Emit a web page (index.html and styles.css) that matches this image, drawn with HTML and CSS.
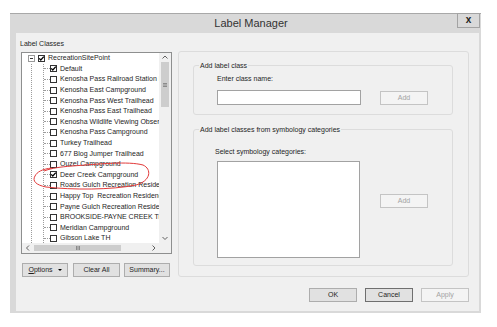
FILE: index.html
```html
<!DOCTYPE html>
<html>
<head>
<meta charset="utf-8">
<link rel="stylesheet" href="styles.css">
</head>
<body>
<div class="window">
  <div class="titlebar">
    <div class="title">Label Manager</div>
    <div class="close">x</div>
  </div>
  <div class="client">
    <div class="main">
      <div class="left">
        <div class="section-label">Label Classes</div>
        <div class="tree">
          <div class="tree-content">
            <div class="row root">
              <span class="expander"><span class="minus"></span></span>
              <span class="cb"><svg viewBox="0 0 7 7" class="tick"><path d="M1.2 3.4 L2.8 5 L5.8 1.6"/></svg></span>
              <span class="txt">RecreationSitePoint</span>
            </div>
            <div class="children">
              <div class="row"><span class="stub"></span><span class="cb"><svg viewBox="0 0 7 7" class="tick"><path d="M1.2 3.4 L2.8 5 L5.8 1.6"/></svg></span><span class="txt">Default</span></div>
              <div class="row"><span class="stub"></span><span class="cb"></span><span class="txt">Kenosha Pass Railroad Station Interpretive Site</span></div>
              <div class="row"><span class="stub"></span><span class="cb"></span><span class="txt">Kenosha East Campground</span></div>
              <div class="row"><span class="stub"></span><span class="cb"></span><span class="txt">Kenosha Pass West Trailhead</span></div>
              <div class="row"><span class="stub"></span><span class="cb"></span><span class="txt">Kenosha Pass East Trailhead</span></div>
              <div class="row"><span class="stub"></span><span class="cb"></span><span class="txt">Kenosha Wildlife Viewing Observation Site</span></div>
              <div class="row"><span class="stub"></span><span class="cb"></span><span class="txt">Kenosha Pass Campground</span></div>
              <div class="row"><span class="stub"></span><span class="cb"></span><span class="txt">Turkey Trailhead</span></div>
              <div class="row"><span class="stub"></span><span class="cb"></span><span class="txt">677 Blog Jumper Trailhead</span></div>
              <div class="row"><span class="stub"></span><span class="cb"></span><span class="txt">Ouzel Campground</span></div>
              <div class="row"><span class="stub"></span><span class="cb"><svg viewBox="0 0 7 7" class="tick"><path d="M1.2 3.4 L2.8 5 L5.8 1.6"/></svg></span><span class="txt">Deer Creek Campground</span></div>
              <div class="row"><span class="stub"></span><span class="cb"></span><span class="txt">Roads Gulch Recreation Residence</span></div>
              <div class="row"><span class="stub"></span><span class="cb"></span><span class="txt">Happy Top  Recreation Residence</span></div>
              <div class="row"><span class="stub"></span><span class="cb"></span><span class="txt">Payne Gulch Recreation Residence</span></div>
              <div class="row"><span class="stub"></span><span class="cb"></span><span class="txt">BROOKSIDE-PAYNE CREEK Trail</span></div>
              <div class="row"><span class="stub"></span><span class="cb"></span><span class="txt">Meridian Campground</span></div>
              <div class="row"><span class="stub"></span><span class="cb"></span><span class="txt">Gibson Lake TH</span></div>
            </div>
          </div>
          <div class="vscroll">
            <div class="varrow"><svg viewBox="0 0 12 9"><path d="M3.5 5.5 L6 3 L8.5 5.5"/></svg></div>
            <div class="vthumb"><svg viewBox="0 0 8 6"><path d="M2 1.5 H6 M2 3 H6 M2 4.5 H6"/></svg></div>
            <div class="vtrack"></div>
            <div class="varrow"><svg viewBox="0 0 12 9"><path d="M3.5 3.5 L6 6 L8.5 3.5"/></svg></div>
          </div>
          <div class="hscroll">
            <div class="harrow"><svg viewBox="0 0 12 10"><path d="M7 2.5 L4.5 5 L7 7.5"/></svg></div>
            <div class="hthumb"><svg viewBox="0 0 8 6"><path d="M2.5 1 V5 M4 1 V5 M5.5 1 V5"/></svg></div>
            <div class="htrack"></div>
            <div class="harrow"><svg viewBox="0 0 11 10"><path d="M4.5 2.5 L7 5 L4.5 7.5"/></svg></div>
          </div>
          <div class="corner"></div>
        </div>
        <div class="left-buttons">
          <div class="btn b-options"><span><u>O</u>ptions</span><span class="caret"></span></div>
          <div class="btn b-clear">Clear All</div>
          <div class="btn b-summary">Summary...</div>
        </div>
      </div>
      <div class="right">
        <div class="group g1">
          <span class="legend">Add label class</span>
          <div class="field-label">Enter class name:</div>
          <div class="field-row">
            <div class="input"></div>
            <div class="btn disabled add1">Add</div>
          </div>
        </div>
        <div class="group g2">
          <span class="legend">Add label classes from symbology categories</span>
          <div class="field-label">Select symbology categories:</div>
          <div class="field-row">
            <div class="listbox"></div>
            <div class="btn disabled add2">Add</div>
          </div>
        </div>
      </div>
    </div>
    <div class="footer">
      <div class="btn b-ok">OK</div>
      <div class="btn b-cancel">Cancel</div>
      <div class="btn disabled b-apply">Apply</div>
    </div>
  </div>
</div>
<svg class="annot" viewBox="0 0 497 327" width="497" height="327">
  <path d="M44 171 C52 168 60 167 72 166 C100 164 128 161 143 165 C152 169 151 181 136 185 C112 190 72 190 46 187 C36 185 32 181 35 176 C37 172 42 169 52 168"/>
</svg>
</body>
</html>
```

FILE: styles.css
```css
html, body {
  margin: 0;
  padding: 0;
  background: #ffffff;
}
body {
  position: relative;
  width: 497px;
  height: 327px;
  overflow: hidden;
  font-family: "Liberation Sans", Arial, sans-serif;
  font-size: 7px;
  color: #1e1e1e;
}
.window {
  margin: 13px 0 0 10px;
  width: 471px;
  height: 300px;
  background: #d9d9d9;
  display: flex;
  flex-direction: column;
}
.titlebar {
  height: 20px;
  box-sizing: border-box;
  border-top: 1px solid #a8a8a8;
  background: linear-gradient(to right, transparent 170px, #5d5130 170px, #5d5130 430px, transparent 430px) 0 -1px / 100% 1px no-repeat, #d9d9d9;
  display: flex;
  align-items: flex-start;
}
.title {
  flex: 1;
  text-align: center;
  padding-left: 35px;
  font-size: 11px;
  line-height: 19px;
  color: #333;
}
.close {
  width: 23px;
  height: 15px;
  margin-top: -1px;
  margin-right: 1px;
  box-sizing: border-box;
  border: 1px solid #a3a3a3;
  background: #d9d9d9;
  font-weight: bold;
  font-size: 10px;
  line-height: 12px;
  text-align: center;
  color: #222;
}
.client {
  margin: 0 2px 2px 6px;
  height: 278px;
  background: #f0f0f0;
  box-sizing: border-box;
  padding: 6px 10px 0 5px;
}
.main {
  display: flex;
  gap: 6px;
  align-items: flex-start;
}
.left {
  width: 151px;
}
.section-label {
  line-height: 10px;
  height: 10px;
  margin-left: -1px;
}
.tree {
  margin-top: 3px;
  width: 151px;
  height: 202px;
  box-sizing: border-box;
  border: 1px solid #8e8f8f;
  background: #fff;
  display: grid;
  grid-template-columns: 137px 12px;
  grid-template-rows: 190px 10px;
}
.tree-content {
  overflow: hidden;
}
.row {
  height: 10.6px;
  display: flex;
  align-items: center;
}
.row.root {
  padding-left: 6px;
}
.expander {
  width: 7px;
  height: 7px;
  box-sizing: border-box;
  border: 1px solid #9a9a9a;
  display: flex;
  align-items: center;
  justify-content: center;
  background: #fff;
  flex: none;
}
.minus {
  width: 3px;
  height: 1px;
  background: #333;
}
.root .cb {
  margin-left: 3px;
}
.cb {
  width: 7px;
  height: 7px;
  box-sizing: border-box;
  border: 1px solid #333;
  background: #fff;
  flex: none;
  display: flex;
  align-items: center;
  justify-content: center;
}
.tick {
  width: 7px;
  height: 7px;
  flex: none;
  overflow: visible;
}
.tick path {
  fill: none;
  stroke: #000;
  stroke-width: 1.3;
}
.txt {
  margin-left: 3px;
  line-height: 10px;
  white-space: pre;
  flex: none;
}
.children {
  background-image: repeating-linear-gradient(to bottom, #9c9c9c 0 1px, transparent 1px 2px), repeating-linear-gradient(to bottom, #9c9c9c 0 1px, transparent 1px 2px);
  background-size: 1px 100%, 1px 100%;
  background-position: 9px 0, 21px 0;
  background-repeat: no-repeat;
}
.children .row {
  padding-left: 22px;
}
.stub {
  width: 6px;
  height: 0;
  border-top: 1px dotted #9c9c9c;
  flex: none;
}
.vscroll {
  background: #f0f0f0;
  display: flex;
  flex-direction: column;
}
.varrow {
  height: 9px;
  flex: none;
}
.varrow:last-child {
  height: 10px;
}
.varrow svg, .harrow svg {
  display: block;
  width: 100%;
  height: 100%;
}
.varrow path, .harrow path {
  fill: none;
  stroke: #606060;
  stroke-width: 1;
}
.vthumb {
  height: 45px;
  margin: 0 2px;
  background: #cdcdcd;
  display: flex;
  align-items: center;
  justify-content: center;
}
.vthumb svg, .hthumb svg {
  width: 8px;
  height: 6px;
}
.vthumb path, .hthumb path {
  stroke: #7a7a7a;
  stroke-width: 0.8;
  fill: none;
}
.vtrack, .htrack {
  flex: 1;
}
.hscroll {
  background: #f0f0f0;
  display: flex;
}
.harrow {
  width: 12px;
  flex: none;
}
.harrow:last-child {
  width: 11px;
}
.hthumb {
  width: 87px;
  margin: 2px 0;
  background: #cdcdcd;
  display: flex;
  align-items: center;
  justify-content: center;
}
.corner {
  background: #f0f0f0;
}
.left-buttons {
  margin-top: 9px;
  display: flex;
}
.btn {
  height: 14px;
  box-sizing: border-box;
  border: 1px solid #adadad;
  background: #e1e1e1;
  display: flex;
  align-items: center;
  justify-content: center;
  line-height: 10px;
  color: #1e1e1e;
  flex: none;
}
.btn.disabled {
  border-color: #c4c4c4;
  background: #f4f4f4;
  color: #a3a3a3;
}
.b-options {
  margin-left: 1px;
  width: 46px;
  gap: 5px;
}
.caret {
  width: 0;
  height: 0;
  border-left: 2px solid transparent;
  border-right: 2px solid transparent;
  border-top: 2px solid #000;
}
.b-clear {
  margin-left: 5px;
  width: 47px;
}
.b-summary {
  margin-left: 4px;
  width: 46px;
}
.right {
  margin-top: 12px;
  width: 292px;
  height: 226px;
  box-sizing: border-box;
  border: 1px solid #dcdcdc;
  border-radius: 3px;
  padding: 13px 0 0 14px;
}
.group {
  position: relative;
  width: 260px;
  box-sizing: border-box;
  border: 1px solid #dcdcdc;
  border-radius: 3px;
}
.legend {
  position: absolute;
  top: -5px;
  left: 5px;
  padding: 0 1px;
  background: #f0f0f0;
  line-height: 9px;
}
.g1 {
  height: 50px;
  padding: 8px 0 0 23px;
}
.g2 {
  height: 137px;
  margin-top: 14px;
  padding: 17px 0 0 21px;
}
.field-label {
  line-height: 10px;
  height: 10px;
}
.field-row {
  display: flex;
  align-items: flex-start;
}
.g1 .field-row {
  margin-top: 6px;
}
.input {
  width: 144px;
  height: 15px;
  box-sizing: border-box;
  border: 1px solid #a2a2a2;
  background: #fff;
}
.add1 {
  margin-left: 19px;
  margin-top: 1px;
  width: 48px;
}
.g2 .field-row {
  margin-top: 4px;
  margin-left: 2px;
}
.listbox {
  width: 143px;
  height: 97px;
  box-sizing: border-box;
  border: 1px solid #a2a2a2;
  background: #fff;
}
.add2 {
  margin-left: 20px;
  margin-top: 33px;
  width: 48px;
}
.footer {
  margin-top: 11px;
  display: flex;
  justify-content: flex-end;
  gap: 8px;
}
.footer .btn {
  width: 48px;
}
.b-cancel {
  border-color: #6f6f6f;
}
.annot {
  position: absolute;
  left: 0;
  top: 0;
  pointer-events: none;
}
.annot path {
  fill: none;
  stroke: #e23a3a;
  stroke-width: 1;
}
```
